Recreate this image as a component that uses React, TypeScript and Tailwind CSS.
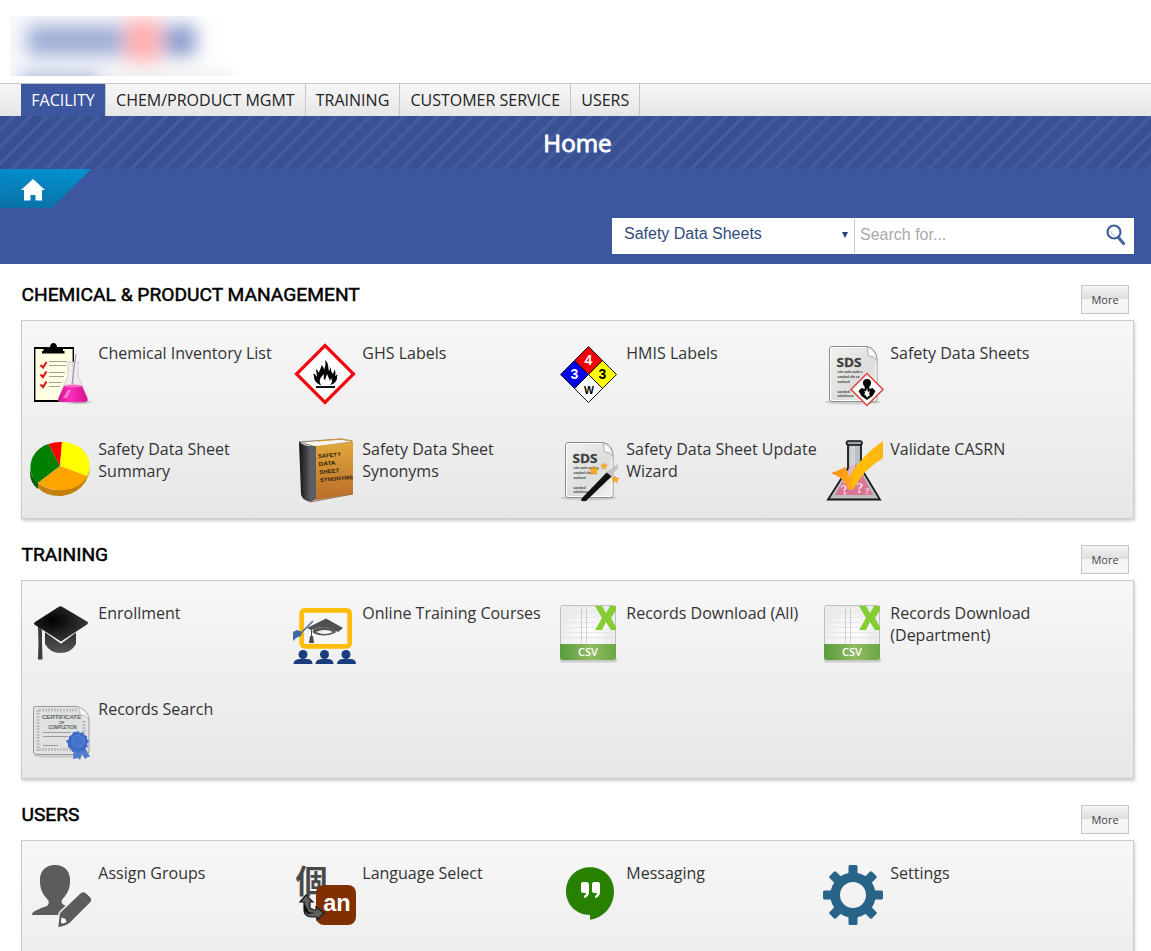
import React from "react";

const S = ({ children }: { children: React.ReactNode }) => (
  <svg viewBox="0 0 64 64" className="block h-16 w-16 shrink-0 overflow-visible" fontFamily="Open Sans, sans-serif">
    {children}
  </svg>
);

const Clipboard = () => (
  <S>
    <defs>
      <linearGradient id="cbPink" x1="0" x2="1"><stop offset="0" stopColor="#d0148c" /><stop offset=".4" stopColor="#ff2cbc" /><stop offset="1" stopColor="#d3128f" /></linearGradient>
      <radialGradient id="cbShade"><stop offset="0" stopColor="#555" stopOpacity=".7" /><stop offset="1" stopColor="#555" stopOpacity="0" /></radialGradient>
    </defs>
    <rect x="6.7" y="5.7" width="38.6" height="53" fill="#fffde2" stroke="#000" strokeWidth="1.4" />
    <path d="M6 6h40M6 59h34" stroke="#000" strokeWidth="2" />
    <path d="M22 5q.5-4 3.5-4t3.500 4v2h6v2h1.500v2.500H14V9h1.500V7H22z" fill="#000" />
    <g stroke="#8a8a88" strokeWidth=".8"><path d="M21 19.500h18M21 23.500h17M21 30.500h16M21 34.500h15M21 40.500h13M21 44.500h11" /></g>
    <g fill="none" stroke="#e01818" strokeWidth="2.200"><path d="m12.500 23 2.500 2.500 3.500-5.500M12.500 32.500l2.500 2.500 3.500-5.500M12.500 42.500l2.500 2.500 3.500-5.500" /></g>
    <ellipse cx="50" cy="60" rx="16" ry="2.500" fill="url(#cbShade)" />
    <path d="M40 20h11l-1 3v11l9.500 21q2 5-4 5H34q-5 0-3-5l9-21V23z" fill="#f1e9ef" fillOpacity=".85" stroke="#c7b9c4" strokeWidth=".7" />
    <path d="m36 44-5.500 12q-1 4 3 4h22.500q5 0 3-4.500L54 44z" fill="url(#cbPink)" />
    <ellipse cx="45" cy="44" rx="9" ry="1.500" fill="#f76bc4" />
    <path d="M48 12 44 42" stroke="#9a93a5" strokeWidth="1" />
    <path d="m40 48-5 8h4l4-8z" fill="#ffa7df" fillOpacity=".7" />
  </S>
);

const Flame = () => (
  <S>
    <path d="M33 3.500 61.500 32 33 60.500 4.500 32z" fill="#fff" stroke="#f00a0e" strokeWidth="3.200" />
    <path d="M28 43c-4-2-6-5-6-8 0-2-.5-2.500-1-3 3 0 3 2 4 3 0-3-1-5-1-8 2 1 2 3 3 4 0-3 3-5 2-8 2 1 3 3 3 5 1-3 2-6 1-10 4 3 3 8 4 11l2-4c0 4 0 4 2 7l2-5c0 3 1 4 0 7l3-2c-2 3 0 4-2 7-1 2-3 3-6 4 3-3 2-5 1-7l-1 3-3-7-2 6c-2-1-1-4-1-6-3 3-6 6-3 11z" fill="#050505" />
    <path d="M24 45h19" stroke="#111" strokeWidth="2" />
  </S>
);

const Hmis = () => (
  <S>
    <path d="M32.500 4.500 46.500 18.500 32.500 32.500 18.500 18.500z" fill="#f00004" />
    <path d="m18.500 18.500 14 14-14 14-14-14z" fill="#0000ee" />
    <path d="m46.500 18.500 14 14-14 14-14-14z" fill="#ffff00" />
    <path d="m32.500 32.500 14 14-14 14-14-14z" fill="#fff" />
    <path d="m32.500 4.500 28 28-28 28-28-28zM18.500 18.500l28 28M46.500 18.500l-28 28" fill="none" stroke="#111" strokeWidth="1" />
    <g fontFamily="Liberation Sans, sans-serif" fontWeight="700" fontSize="14" textAnchor="middle">
      <text x="32.500" y="23" fill="#fff">4</text><text x="18.500" y="37" fill="#fff">3</text><text x="46.500" y="37">3</text><text x="33" y="51.500" fontSize="10.500">W</text>
    </g>
  </S>
);

const SheetBase = () => (
  <>
    <defs><linearGradient id="sdsPaper" x1="0" y1="0" x2="1" y2="1"><stop stopColor="#f2f3f1" /><stop offset=".6" stopColor="#dcdedb" /><stop offset="1" stopColor="#f4f4f3" /></linearGradient></defs>
    <ellipse cx="33" cy="60" rx="28" ry="2.500" fill="#bbb" opacity=".65" />
    <path d="M12 4.500h35q10 2 10 14V57q0 2.500-2.500 2.500h-43Q9.500 59.500 9.500 57V7q0-2.500 2.500-2.500z" fill="url(#sdsPaper)" stroke="#8b8e8b" />
    <path d="M10.500 7q0-1.500 1.500-1.500H47M10.500 7v50q0 1.500 1.500 1.500h42q2 0 2-2V19" fill="none" stroke="#fff" />
    <path d="M47 5q2 6 1 9 5-1 9 4Q56 7 47 5z" fill="#fafafa" stroke="#999" strokeWidth=".7" />
    <text x="16.500" y="24.500" fontSize="13" fontWeight="700" fill="#3f4040" stroke="#3f4040" strokeWidth=".3" textLength="25" lengthAdjust="spacingAndGlyphs">SDS</text>
    <g fontSize="3.500" fontWeight="700" fill="#555"><text x="17.500" y="30.500" textLength="25">sdx sads asda s</text><text x="17.500" y="35.500" textLength="22">sasdad sfa sa</text><text x="17.500" y="41">asdasd</text><text x="17.500" y="50.500">sasdad</text><text x="17.500" y="55.300">adsdassa</text></g>
  </>
);

const Sds = () => (
  <S>
    <SheetBase />
    <path d="m47 31.500 16 16-16 16-16-16z" fill="#fff" stroke="#e0413a" strokeWidth="1.500" />
    <circle cx="47" cy="41" r="4" />
    <path d="m45 43h4l.5 4 3-1 3 3-3 5-5.500 4-5.500-4-3-5 3-3 3 1z" />
    <path d="m47 46 1 4 2-1-1 3 1.500 2-1.500-.5-2 2-2-3-1 1 1-3-1-2 2 1z" fill="#fff" />
  </S>
);

const Pie = () => (
  <S>
    <g transform="translate(0 2)">
      <path d="M2 27q0 9 8 16v6Q2 43 2 33z" fill="#075c07" />
      <path d="M10 43q10 8 24 7 16-2 24-14v5Q50 54 34 56 19 57 10 48z" fill="#c47f0c" />
      <path d="M58 37q4-5 4-11v5q-1 4-4 10z" fill="#bcb700" />
      <path d="M32 26 10 43C-3 33 1 10 20.500 4z" fill="#008000" />
      <path d="M32 26 20.500 4Q27 1.500 34 2z" fill="#ff0000" />
      <path d="m32 26 2-24C56 3 67 20 59 36z" fill="#ffff00" />
      <path d="m32 26 27 10C51 53 24 54 10 43z" fill="#ffa500" />
    </g>
  </S>
);

const Book = () => (
  <S>
    <defs>
      <linearGradient id="bkCover" x2="0" y2="1"><stop stopColor="#e2a83c" /><stop offset="1" stopColor="#b86c29" /></linearGradient>
      <linearGradient id="bkSpine"><stop stopColor="#111" /><stop offset=".6" stopColor="#55565a" /><stop offset="1" stopColor="#333" /></linearGradient>
    </defs>
    <path d="m7 4 41-3 12 2v1L24 9z" fill="#f5f3eb" stroke="#574732" strokeWidth=".7" />
    <path d="M26 3 50 1l10 2" fill="none" stroke="#d89a31" strokeWidth="1" />
    <path d="M7 4q5 5 17 4v53l-6 3q-9-3-9-8z" fill="url(#bkSpine)" />
    <path d="M17 8q3 1 7 0v53l-6 3z" fill="#5b5e62" />
    <path d="m24 8 37-4v52l-37 6z" fill="url(#bkCover)" />
    <path d="M18 64 61 56" stroke="#74481f" strokeWidth=".7" />
    <g transform="rotate(-5 27 30)" fontFamily="Liberation Sans, sans-serif" fontSize="5.500" fontWeight="700" fill="#271d0c"><text x="27" y="20" textLength="23" lengthAdjust="spacingAndGlyphs">SAFETY</text><text x="27" y="28" textLength="17" lengthAdjust="spacingAndGlyphs">DATA</text><text x="27" y="36" textLength="20" lengthAdjust="spacingAndGlyphs">SHEET</text><text x="27" y="44" textLength="33" lengthAdjust="spacingAndGlyphs">SYNONYMS</text></g>
  </S>
);

const Wizard = () => (
  <S>
    <SheetBase />
    <defs><linearGradient id="wdWand" x1="0" x2="1" y2="1"><stop stopColor="#555" /><stop offset=".5" stopColor="#111" /></linearGradient></defs>
    <path d="m26 60 25-26 5 4-26 25q-7 1-4-3z" fill="url(#wdWand)" />
    <path d="m50 34 12-8v4l-7 8z" fill="#c4c4c4" />
    <g fill="#ffaf18" stroke="#d98b15" strokeWidth=".5"><path d="m37.500 28 1.500 3h4l-3 2 1 3.500-3.500-1.500-3 1.500 1-3.500-3-2.500 4 .5z" /><path d="m48 25 1 2h2.500l-2 1.500.5 2.500-2-1.500-2 1.500.5-2.500-2-1.500H47zM59 38l1 2h3l-2 2 .5 3-2.500-2-2 2 .5-3-2-2h3z" /></g>
  </S>
);

const Casrn = () => (
  <S>
    <defs><linearGradient id="csCheck" x1="0" x2="1"><stop stopColor="#f98e14" /><stop offset=".35" stopColor="#ffa51a" /><stop offset=".5" stopColor="#fec000" /><stop offset="1" stopColor="#ffb516" /></linearGradient></defs>
    <path d="M28 5v25L8 61.500h52L41 30V5z" fill="#b9bfc2" stroke="#181818" strokeWidth="1.800" />
    <path d="M31 27h8l2 7 12 23H15l14-25z" fill="#da7593" />
    <path d="M31 7h4v23l-9 14q-3 3-3 0l7-13z" fill="#e1e5e7" fillOpacity=".6" />
    <rect x="26.500" y="3" width="15.500" height="4" rx="2" fill="#9da3a7" stroke="#111" strokeWidth="1.500" />
    <g fill="#f7dbe4" fontFamily="Liberation Serif, serif" fontWeight="700"><text x="22" y="57" fontSize="14" transform="rotate(-12 22 57)">?</text><text x="36" y="55" fontSize="15">?</text><text x="45" y="56" fontSize="9">?</text></g>
    <path d="M11 35q7-2 14-6 2 3 4 10Q42 17 63 3v17Q43 32 34 50q-3 4-6 0-4-10-17-15z" fill="url(#csCheck)" />
  </S>
);

const Cap = () => (
  <S>
    <defs>
      <radialGradient id="gcTop" cx=".35" cy=".4" r=".7"><stop stopColor="#000" /><stop offset="1" stopColor="#3c3c3c" /></radialGradient>
      <linearGradient id="gcBase" x2="0" y2="1"><stop stopColor="#252525" /><stop offset="1" stopColor="#555" /></linearGradient>
    </defs>
    <path d="M17 26v16q5 9 15.500 9T48 42V26L33 38z" fill="url(#gcBase)" />
    <path d="M10 25h4v15l.5 17.500H10l.5-17z" fill="#3c3c3c" />
    <path d="M13.500 26.500 33 40.500 49 28.500" fill="none" stroke="#f5f5f5" strokeWidth="2" />
    <path d="m30.500 5q2-1.500 4 0L59 19.500q2 1.500 0 3L33 39.500 7 23q-2-1.500 0-3z" fill="url(#gcTop)" />
  </S>
);

const Course = () => (
  <S>
    <rect x="9.700" y="8.300" width="48" height="36" rx="3" fill="#f6f6f6" stroke="#fdbd0d" strokeWidth="4.800" />
    <path d="m15 26 19-9.500L51 26l-5 4-6-3q-8-4-18 0l-3 1z" fill="#505050" />
    <path d="M21 31q-1-3 1-4 10-4 20 0 3 2 1 4-11 5-22 0zm3-1q9 4 17 0-8-4-17 0z" fill="#575757" fillRule="evenodd" />
    <path d="M19 27v7h-1l-1 7h5l-1-7h-1v-7z" fill="#4c4c4c" />
    <path d="M21 19 8 32" stroke="#5375a4" strokeWidth="1.700" />
    <path d="m1 30 4-2 5 2-1 4-5 2-3 3z" fill="#4168a3" />
    <g transform="translate(0 -2)" fill="#193d7d"><circle cx="11" cy="54.500" r="4.500" /><circle cx="32.500" cy="54.500" r="4.500" /><circle cx="54" cy="54.500" r="4.500" /><path d="M1.500 64q0-4.500 6-5h7q6 0 6 5zM23.500 64q0-4.500 6-5h6q6 0 6 5zM45 64q0-4.500 6-5h7q6 0 6 5z" /></g>
  </S>
);

const Csv = () => (
  <S>
    <defs>
      <linearGradient id="csvBar"><stop stopColor="#589c3b" /><stop offset=".55" stopColor="#91ba65" /><stop offset="1" stopColor="#6aa843" /></linearGradient>
      <radialGradient id="csvPaper"><stop stopColor="#fff" /><stop offset="1" stopColor="#ececec" /></radialGradient>
    </defs>
    <g transform="translate(0 -1)">
      <rect x="4" y="57" width="57" height="4.500" rx="2.200" fill="#bbb" opacity=".7" />
      <rect x="4.500" y="4.500" width="55" height="54" rx="2" fill="url(#csvPaper)" stroke="#bfbfbf" />
      <path d="M50.500 31v11M55.500 31v11M6 11.500h34M6 16.500h34M6 21.500h34M6 26.500h36M6 31.500h52M6 36.500h52" stroke="#e6e6e6" />
      <path d="M25.500 6v36M30.500 6v36" stroke="#cfcfcf" />
      <path d="M4 43h56v13q0 3-3 3H7q-3 0-3-3z" fill="url(#csvBar)" />
      <path d="M39 5h7l4 7 4-7h6v4l-5 8 5 9v3h-5l-5-8-4 8h-7l7-12z" fill="#86cd35" />
      <text x="32" y="55" textAnchor="middle" fontSize="11" fontWeight="600" fill="#fff">CSV</text>
    </g>
  </S>
);

const Certificate = () => (
  <S>
    <ellipse cx="30" cy="58" rx="25" ry="2" fill="#bbb" opacity=".6" />
    <path d="M7 8.500h42q12 4 12 14v31q0 3-3 3H8q-2.500 0-2.500-3v-43q0-2 1.500-2z" fill="#e3e4e2" stroke="#999b99" />
    <path d="M10 12v41M11 51.500h42M11 12h38" stroke="#bdbfbd" strokeWidth="3" strokeDasharray="2 1" />
    <rect x="12" y="14" width="42" height="36" fill="#dadddb" fillOpacity=".5" />
    <path d="M50 9q3 5 2 8 5-1 9 4-1-8-11-12z" fill="#fafafa" stroke="#aaa" strokeWidth=".7" />
    <path d="M56 23v15" stroke="#bbb" strokeWidth="3" strokeDasharray="2 1" />
    <g fontFamily="Liberation Sans, sans-serif" fontSize="5" fill="#525757" stroke="#525757" strokeWidth=".15"><text x="14" y="21" textLength="39" lengthAdjust="spacingAndGlyphs">CERTIFICATE</text><text x="31" y="26" fontSize="4">OF</text><text x="20.500" y="30.500" fontSize="4.500" textLength="28" lengthAdjust="spacingAndGlyphs">COMPLETION</text></g>
    <path d="M15 34.500h28M15 38.500h25M15 47.500h15" stroke="#9a9c9b" />
    <path d="m46 49-1 12 5-1 2 2 2-6 3 5 3-2h2l-6-12z" fill="#527dcc" />
    <path d="m50 33 2 2 3-1 1 3 3 1v3l2 2-2 3 1 3-3 1-1 3h-3l-3 2-2-2-4 1-1-3-3-2v-3l-2-3 3-2v-3l3-1 1-3h3z" fill="#3d6bc6" />
    <circle cx="50" cy="43" r="5.800" fill="#4473cd" stroke="#648ad6" strokeWidth="1.500" strokeDasharray="1 1" />
  </S>
);

const Assign = () => (
  <S>
    <path d="M27 3c10 0 16 7 15 17 0 8-4 13-8 18-1 3 0 4 4 6l-4 9H4q0-3 3-4 5-3 12-5 3-3 1-6c-5-5-8-11-8-18C11 10 17 3 27 3z" fill="#5c5c5c" />
    <path d="m31 52 1-2 20-19q3.500-3 6.500 0l4.500 4q2 2.500 0 5.500L42.500 61q-4 3.500-13 5z" fill="#5c5c5c" stroke="#f5f5f5" strokeWidth="1.500" />
    <path d="m33.500 55.500 4 1.500 1 3-3 1.500-2.500-.5z" fill="#fff" />
    <path d="m53 34 7 8" stroke="#777" strokeWidth=".8" />
  </S>
);

const Language = () => (
  <S>
    <text x="3.500" y="31" fontFamily="Noto Sans CJK JP, sans-serif" fontWeight="700" fontSize="32" fill="#484848">個</text>
    <rect x="24" y="23" width="40" height="40" rx="8" fill="#803000" />
    <path d="m14 33 7 7h-3v6l4 2h2v-3l8 6-7 7v-3h-6q-7-1-7-7v-8H8z" fill="#606060" stroke="#171717" strokeWidth="1.200" />
    <path d="m12 41 5 9 6 1-7 1-4-3z" fill="#111" />
    <text x="45" y="48.500" textAnchor="middle" fontFamily="Liberation Sans, sans-serif" fontWeight="700" fontSize="23.500" fill="#fff">an</text>
  </S>
);

const Messaging = () => (
  <S>
    <path d="M34 5.300C20 5.300 10 16 10 29.500 10 42 20 53 34 53v4.800c13-2 24-13 24-28.300C58 16 48 5.300 34 5.300z" fill="#288000" />
    <path d="M27 20h3q3 0 3 3v7q0 5-5 6v-2q2-1 2-3h-3q-2 0-2-2v-7q0-2 2-2zm11 0h4q2 0 2 3v7q0 5-5 6v-2q2-1 2-3h-3q-2 0-2-2v-7q0-2 2-2z" fill="#fff" />
  </S>
);

const Settings = () => (
  <S>
    <g fill="#286388">
      <circle cx="33" cy="33" r="17.800" fill="none" stroke="#286388" strokeWidth="9.600" />
      <path id="gearTooth" d="M26.500 15q2-2 2-5V4.500Q28.500 3 30 3h6q1.500 0 1.500 1.500V10q0 3 2 5z" />
      {[45, 90, 135, 180, 225, 270, 315].map((a) => (
        <use key={a} href="#gearTooth" transform={`rotate(${a} 33 33)`} />
      ))}
    </g>
  </S>
);

type Item = { label: string; Icon: () => React.JSX.Element };
const sections: { title: string; items: Item[] }[] = [
  {
    title: "CHEMICAL & PRODUCT MANAGEMENT",
    items: [
      { label: "Chemical Inventory List", Icon: Clipboard },
      { label: "GHS Labels", Icon: Flame },
      { label: "HMIS Labels", Icon: Hmis },
      { label: "Safety Data Sheets", Icon: Sds },
      { label: "Safety Data Sheet Summary", Icon: Pie },
      { label: "Safety Data Sheet Synonyms", Icon: Book },
      { label: "Safety Data Sheet Update Wizard", Icon: Wizard },
      { label: "Validate CASRN", Icon: Casrn },
    ],
  },
  {
    title: "TRAINING",
    items: [
      { label: "Enrollment", Icon: Cap },
      { label: "Online Training Courses", Icon: Course },
      { label: "Records Download (All)", Icon: Csv },
      { label: "Records Download (Department)", Icon: Csv },
      { label: "Records Search", Icon: Certificate },
    ],
  },
  {
    title: "USERS",
    items: [
      { label: "Assign Groups", Icon: Assign },
      { label: "Language Select", Icon: Language },
      { label: "Messaging", Icon: Messaging },
      { label: "Settings", Icon: Settings },
    ],
  },
];

const tabs = ["CHEM/PRODUCT MGMT", "TRAINING", "CUSTOMER SERVICE", "USERS"];

export default function App() {
  return (
    <div className="h-[951px] w-full overflow-hidden bg-white font-['Open_Sans',sans-serif] text-[#333]">
      <header className="h-[83px] pt-4 pl-2.5">
        <div className="h-[60px] w-[232px] overflow-hidden bg-linear-to-r from-[#f8f9fc] to-white">
          <svg width="232" height="60">
            <defs><filter id="soft" x="-50%" y="-100%" width="200%" height="300%"><feGaussianBlur stdDeviation="9" /></filter></defs>
            <g filter="url(#soft)">
              <rect x="17" y="9" width="97" height="31" fill="#a0aed6" />
              <rect x="116" y="3" width="34" height="43" fill="#ffb0b0" />
              <rect x="153" y="9" width="33" height="31" fill="#8f9fce" />
              <rect x="10" y="60" width="80" height="12" fill="#8295c8" />
              <rect x="92" y="61" width="130" height="9" fill="#ddd" />
            </g>
          </svg>
        </div>
      </header>
      <nav className="flex h-[33px] border-t border-[#c5c6c8] bg-linear-to-b from-[#f7f7f7] to-[#e6e6e6] pl-[21px] text-[16px] leading-[32px] text-[#222]">
        <div className="w-[85px] border-r border-[#c5c6c8] bg-[#3c569f] text-center text-white">FACILITY</div>
        {tabs.map((t) => (
          <div key={t} className="border-r border-[#c5c6c8] px-[10.1px] whitespace-nowrap">{t}</div>
        ))}
      </nav>
      <div className="h-[148px] bg-[#3c569f]">
        <div className="h-[53px] bg-[repeating-linear-gradient(135deg,#395193_0px,#395193_8px,#425c9f_8.5px,#425c9f_11.5px,#395193_12px)] pl-1 text-center text-[24.2px] leading-[54px] font-normal text-white [-webkit-text-stroke:0.9px_white]">Home</div>
        <div className="h-[39px]">
          <svg width="92" height="39" className="block">
            <defs><linearGradient id="crumb" x1="0" y1="1" x2=".2" y2="0"><stop stopColor="#0a70a5" /><stop offset="1" stopColor="#048ecb" /></linearGradient></defs>
            <path d="M0 0h91L52 39H0z" fill="url(#crumb)" />
            <path d="m33 10 12 11h-3v10.500h-6.500V26h-5v5.500H24V21h-3z" fill="#fff" />
          </svg>
        </div>
        <div className="mt-[10px] mr-[17px] ml-auto flex h-9 w-[522px] bg-white font-['Liberation_Sans',sans-serif] text-[16px]">
          <div className="my-px flex w-[243px] items-center justify-between border-r border-[#ccc] pr-1.5 pb-1 pl-3 text-[#2f4a7e]">
            <span>Safety Data Sheets</span>
            <svg width="6" height="6" className="mt-0.5"><path d="M0 0h6L3 6z" fill="#28457a" /></svg>
          </div>
          <div className="flex flex-1 items-center justify-between pr-[8px] pl-[5px] text-[#aaa]">
            <span className="pb-[3px]">Search for...</span>
            <svg width="20" height="22" viewBox="0 0 20 22" className="mb-0.5"><path d="m12.500 13.500 5 6" stroke="#4a65a0" strokeWidth="3.200" strokeLinecap="round" /><circle cx="8" cy="8" r="6.500" fill="none" stroke="#3f5e9e" strokeWidth="2.200" /><path d="M4.500 7q1 4 5 5" fill="none" stroke="#a9bbd9" /></svg>
          </div>
        </div>
      </div>
      <main className="pr-[17px] pl-[21px]">
        {sections.map(({ title, items }) => (
          <section key={title} className="h-[260px]">
            <div className="flex h-[56px] items-start justify-between pt-[21px] pr-[5px]">
              <h2 className="pl-[0.5px] font-['Roboto',sans-serif] text-[19.2px] leading-5 font-normal text-black [-webkit-text-stroke:0.5px_black]">{title}</h2>
              <button className="h-[29px] w-12 border border-[#c5c6c8] bg-[linear-gradient(#f4f4f4_0%,#dedede_47%,#f5f5f5_50%,#f5f5f5_100%)] pt-0.5 text-[11px] text-[#444]">More</button>
            </div>
            <div className="grid h-[199px] grid-cols-[repeat(4,264px)] content-start border border-[#c9cbce] bg-linear-to-b from-[#f7f7f7] to-[#e7e7e7] pt-[21px] pl-1.5 shadow-[1px_2px_3px_rgba(0,0,0,0.2)]">
              {items.map(({ label, Icon }) => (
                <div key={label} className="flex h-24 gap-[6.3px]">
                  <Icon />
                  <span className="w-[191px] text-[16px] leading-[22px]">{label}</span>
                </div>
              ))}
            </div>
          </section>
        ))}
      </main>
    </div>
  );
}
